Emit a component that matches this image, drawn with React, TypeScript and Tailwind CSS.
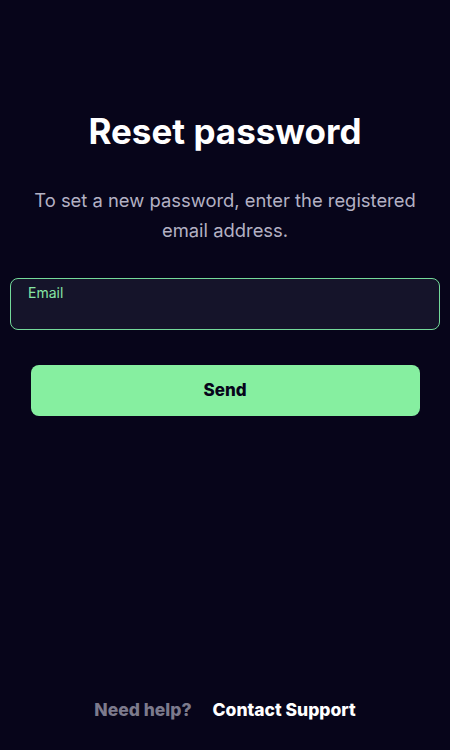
export default function App() {
  return (
    <div className="h-[750px] w-full bg-[#07051a] flex flex-col items-center px-[10px] font-['Inter',sans-serif]">
      <h1 className="mt-[111px] text-[35px] leading-[40px] font-bold text-white">Reset password</h1>
      <p className="mt-[34px] text-[18.4px] leading-[30px] text-[#b3b1c4] text-center px-[18px]">
        To set a new password, enter the registered email address.
      </p>
      <div className="mt-[33px] w-full h-[52px] rounded-[8px] border border-[#74d99a] bg-[#15142a] px-[17px] pt-[6px]">
        <div className="text-[14px] leading-[16px] text-[#86e6a4]">Email</div>
        <input className="w-full bg-transparent outline-none text-white text-[15px]" />
      </div>
      <button className="mt-[35px] w-[389px] h-[51px] rounded-[8px] bg-[#86efa0] text-[#07051a] text-[17px] font-extrabold">
        Send
      </button>
      <div className="mt-auto mb-[27px] flex gap-[21px] text-[17.5px] font-extrabold">
        <span className="text-[#7c7a8c]">Need help?</span>
        <span className="text-white">Contact Support</span>
      </div>
    </div>
  );
}
